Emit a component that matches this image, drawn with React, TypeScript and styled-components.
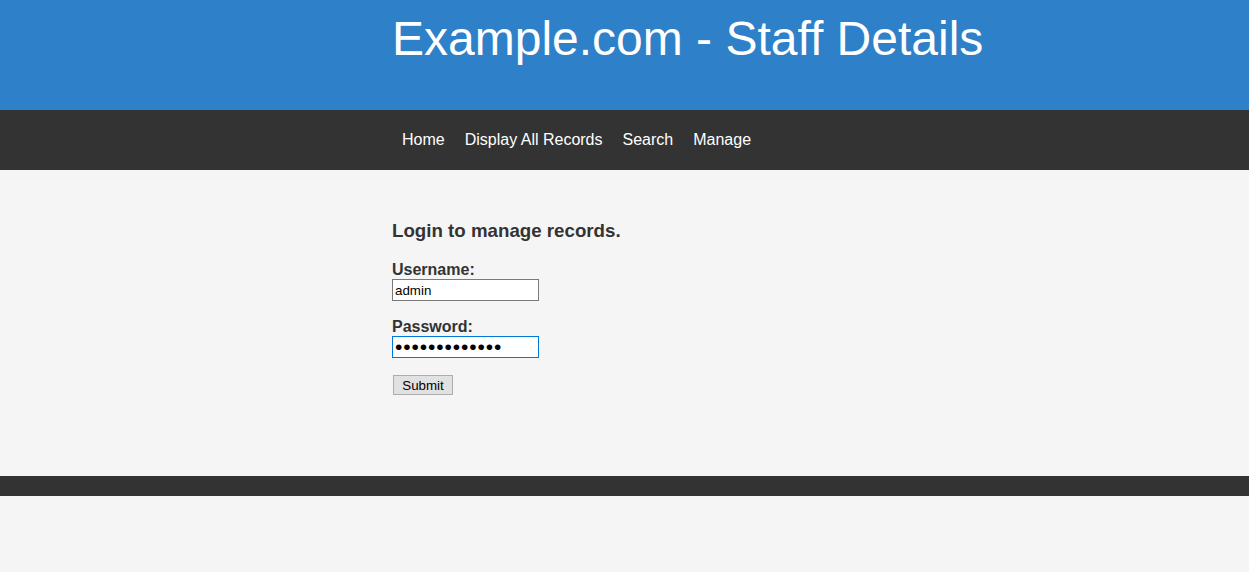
import React from 'react';
import styled, { createGlobalStyle } from 'styled-components';

const GlobalStyle = createGlobalStyle`
  html, body {
    margin: 0;
    padding: 0;
    background: #f5f5f5;
    font-family: "Liberation Sans", Arial, sans-serif;
    color: #333333;
  }
`;

const Header = styled.header`
  background: #2e80c8;
  height: 110px;
  box-sizing: border-box;
  padding-top: 11px;
`;

const Container = styled.div`
  width: 465px;
  margin: 0 auto;
  white-space: nowrap;
`;

const Title = styled.h1`
  margin: 0;
  font-size: 48px;
  line-height: 55px;
  font-weight: normal;
  color: #ffffff;
`;

const Nav = styled.nav`
  background: #333333;
  height: 60px;
  display: flex;
  align-items: center;
`;

const NavList = styled.ul`
  list-style: none;
  margin: 0;
  padding: 0;
  display: flex;
`;

const NavLink = styled.a`
  display: block;
  padding: 0 10px;
  color: #ffffff;
  font-size: 16px;
  text-decoration: none;
`;

const Main = styled.main`
  padding: 31px 0 81px;
`;

const Heading = styled.h3`
  margin: 18.72px 0 19.72px;
  font-size: 18.72px;
  font-weight: bold;
`;

const Form = styled.form`
  display: flex;
  flex-direction: column;
  align-items: flex-start;
`;

const Field = styled.div`
  display: flex;
  flex-direction: column;
  align-items: flex-start;
  margin-bottom: 17px;
`;

const Label = styled.label`
  font-size: 16px;
  font-weight: bold;
`;

const Input = styled.input<{ $active?: boolean }>`
  box-sizing: border-box;
  width: 147px;
  height: 22px;
  padding: 1px 2px;
  margin: 0;
  border: 1px solid ${(p) => (p.$active ? '#0078d7' : '#7a7a7a')};
  background: #ffffff;
  font-family: "Liberation Sans", Arial, sans-serif;
  font-size: 13.33px;
  color: #000000;
  outline: none;

  &[type='password'] {
    font-size: 21px;
    letter-spacing: 0.9px;
    line-height: 18px;
    padding: 0 2px;
  }
`;

const Button = styled.button`
  box-sizing: border-box;
  margin: 0 0 0 1px;
  width: 60px;
  height: 20px;
  padding: 0;
  border: 1px solid #adadad;
  background: #e1e1e1;
  font-family: "Liberation Sans", Arial, sans-serif;
  font-size: 13.33px;
  color: #000000;
`;

const Footer = styled.footer`
  background: #333333;
  height: 20px;
`;

const links = ['Home', 'Display All Records', 'Search', 'Manage'];

const App = function () {
  return (
    <>
      <GlobalStyle />
      <Header>
        <Container>
          <Title>Example.com - Staff Details</Title>
        </Container>
      </Header>
      <Nav>
        <Container>
          <NavList>
            {links.map((l) => (
              <li key={l}>
                <NavLink href="#">{l}</NavLink>
              </li>
            ))}
          </NavList>
        </Container>
      </Nav>
      <Main>
        <Container>
          <Heading>Login to manage records.</Heading>
          <Form onSubmit={(e) => e.preventDefault()}>
            <Field>
              <Label htmlFor="username">Username:</Label>
              <Input id="username" type="text" defaultValue="admin" />
            </Field>
            <Field>
              <Label htmlFor="password">Password:</Label>
              <Input id="password" type="password" defaultValue="adminpassword" $active autoFocus />
            </Field>
            <Button type="submit">Submit</Button>
          </Form>
        </Container>
      </Main>
      <Footer />
    </>
  );
};

export default App;
